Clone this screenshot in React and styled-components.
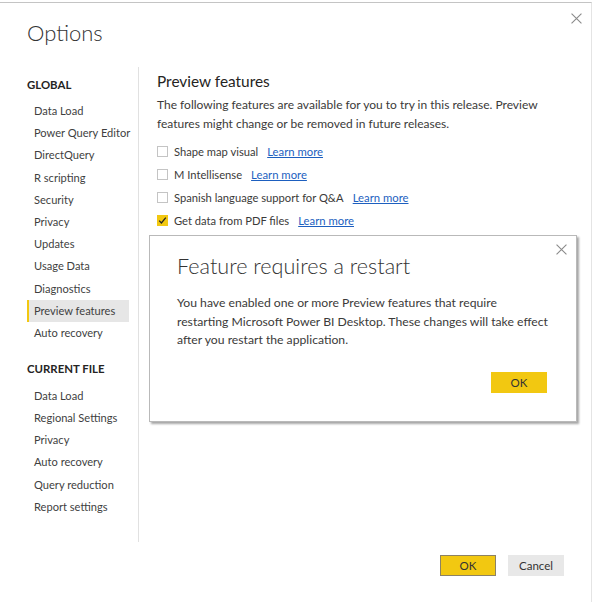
import React from "react";
import styled, { createGlobalStyle } from "styled-components";

const FONT = `"Segoe UI", Lato, "Noto Sans", sans-serif`;

const Global = createGlobalStyle`
  html, body { margin: 0; padding: 0; background: #fff; }
  body { font-family: ${FONT}; color: #3b3a39; }
  * { box-sizing: border-box; }
`;

const Window = styled.div`
  position: relative;
  width: 592px;
  height: 600px;
  margin-top: 2px;
  border-top: 1px solid #c4c4c4;
  border-right: 1px solid #e4e4e4;
  background: #fff;
  font-family: ${FONT};
`;

const CloseX = styled.button`
  position: absolute;
  top: ${(p) => p.$top}px;
  right: ${(p) => p.$right}px;
  width: 14px;
  height: 14px;
  padding: 0;
  border: 0;
  background: transparent;
  display: flex;
  align-items: center;
  justify-content: center;
`;

const Title = styled.h1`
  margin: 0;
  padding: 14px 0 0 27px;
  height: 64px;
  font-family: ${FONT};
  font-weight: 300;
  font-size: 22px;
  line-height: 32px;
  color: #333;
`;

const Body = styled.div`
  display: flex;
  align-items: flex-start;
`;

const Sidebar = styled.nav`
  width: 112px;
  margin-left: 27px;
  padding-top: 6px;
  padding-bottom: 24px;
  border-right: 1px solid #e1e1e1;
`;

const GroupHeader = styled.div`
  height: 24px;
  line-height: 24px;
  margin-top: ${(p) => p.$mt}px;
  font-size: 11.4px;
  font-weight: 700;
  color: #252423;
`;

const ItemList = styled.ul`
  list-style: none;
  margin: ${(p) => p.$mt}px 0 0 0;
  padding: 0;
`;

const Item = styled.li`
  height: 22.2px;
  line-height: 22.2px;
  width: 102px;
  padding-left: ${(p) => (p.$active ? 5 : 7)}px;
  font-size: 11.1px;
  color: #3f3f3f;
  white-space: nowrap;
  background: ${(p) => (p.$active ? "#e6e6e6" : "transparent")};
  border-left: ${(p) => (p.$active ? "2px solid #f2c811" : "0")};
`;

const Content = styled.section`
  flex: 1;
  padding: 3px 0 0 18px;
`;

const SectionTitle = styled.h2`
  margin: 0;
  height: 22px;
  line-height: 22px;
  font-size: 15.4px;
  font-weight: 400;
  color: #252423;
`;

const Desc = styled.p`
  margin: 3px 0 0 0;
  width: 405px;
  font-size: 12px;
  line-height: 19px;
  color: #3b3a39;
`;

const Rows = styled.div`
  margin-top: 6.5px;
`;

const Row = styled.label`
  display: flex;
  align-items: center;
  height: 23px;
  font-size: 11.2px;
  color: #3b3a39;
`;

const Box = styled.span`
  width: 11px;
  height: 11px;
  margin-right: 6px;
  border: 1px solid ${(p) => (p.$checked ? "#f2c811" : "#c4c4c4")};
  background: ${(p) => (p.$checked ? "#f2c811" : "#fff")};
  display: flex;
  align-items: center;
  justify-content: center;
`;

const Link = styled.a`
  margin-left: 9px;
  font-size: 11.3px;
  color: #1d5fbf;
  text-decoration: underline;
  cursor: pointer;
`;

const Footer = styled.div`
  position: absolute;
  left: 0;
  right: 0;
  bottom: 26px;
  display: flex;
  justify-content: flex-end;
  gap: 12px;
  padding-right: 27px;
`;

const Button = styled.button`
  width: 56px;
  height: 21px;
  padding: 0;
  font-family: ${FONT};
  font-size: 11.5px;
  color: #333;
  border: ${(p) => (p.$primary ? "1px solid #8c8264" : "1px solid #e8e8e8")};
  background: ${(p) => (p.$primary ? "#f2c811" : "#e8e8e8")};
`;

const ModalOk = styled(Button)`
  border: 0;
  margin-right: 4px;
`;

const Modal = styled.div`
  position: absolute;
  left: 149px;
  top: 232px;
  width: 428px;
  height: 187px;
  background: #fff;
  border: 1px solid #b9b9b9;
  box-shadow: 2px 2px 2px rgba(0, 0, 0, 0.35);
  padding: 12px 25px 0 27px;
`;

const ModalTitle = styled.h3`
  margin: 0;
  height: 36px;
  line-height: 36px;
  font-size: 21.6px;
  font-weight: 300;
  color: #333;
`;

const ModalText = styled.p`
  margin: 10px 0 0 0;
  font-size: 12.2px;
  line-height: 18.5px;
  color: #3b3a39;
`;

const ModalActions = styled.div`
  display: flex;
  justify-content: flex-end;
  margin-top: 22px;
`;

const XIcon = ({ size = 10, color = "#8a8a8a" }) => (
  <svg width={size} height={size} viewBox="0 0 10 10">
    <path d="M0.5 0.5 L9.5 9.5 M9.5 0.5 L0.5 9.5" stroke={color} strokeWidth="1" fill="none" />
  </svg>
);

const Check = () => (
  <svg width="9" height="9" viewBox="0 0 9 9">
    <path d="M1.2 4.6 L3.4 6.9 L7.8 1.6" stroke="#252423" strokeWidth="1.3" fill="none" />
  </svg>
);

const globalItems = [
  "Data Load",
  "Power Query Editor",
  "DirectQuery",
  "R scripting",
  "Security",
  "Privacy",
  "Updates",
  "Usage Data",
  "Diagnostics",
  "Preview features",
  "Auto recovery",
];

const fileItems = [
  "Data Load",
  "Regional Settings",
  "Privacy",
  "Auto recovery",
  "Query reduction",
  "Report settings",
];

const features = [
  { label: "Shape map visual", checked: false },
  { label: "M Intellisense", checked: false },
  { label: "Spanish language support for Q&A", checked: false },
  { label: "Get data from PDF files", checked: true },
];

export default function App() {
  return (
    <>
      <Global />
      <Window>
        <CloseX $top={8} $right={8} aria-label="Close">
          <XIcon size={11} />
        </CloseX>
        <Title>Options</Title>
        <Body>
          <Sidebar>
            <GroupHeader $mt={0}>GLOBAL</GroupHeader>
            <ItemList $mt={3}>
              {globalItems.map((t) => (
                <Item key={t} $active={t === "Preview features"}>
                  {t}
                </Item>
              ))}
            </ItemList>
            <GroupHeader $mt={12.8}>CURRENT FILE</GroupHeader>
            <ItemList $mt={3.9}>
              {fileItems.map((t) => (
                <Item key={t}>{t}</Item>
              ))}
            </ItemList>
          </Sidebar>
          <Content>
            <SectionTitle>Preview features</SectionTitle>
            <Desc>
              The following features are available for you to try in this release. Preview
              features might change or be removed in future releases.
            </Desc>
            <Rows>
              {features.map((f) => (
                <Row key={f.label}>
                  <Box $checked={f.checked}>{f.checked && <Check />}</Box>
                  {f.label}
                  <Link>Learn more</Link>
                </Row>
              ))}
            </Rows>
          </Content>
        </Body>
        <Footer>
          <Button $primary>OK</Button>
          <Button>Cancel</Button>
        </Footer>
        <Modal>
          <CloseX $top={6} $right={8} aria-label="Close">
            <XIcon size={11} />
          </CloseX>
          <ModalTitle>Feature requires a restart</ModalTitle>
          <ModalText>
            You have enabled one or more Preview features that require restarting Microsoft
            Power BI Desktop. These changes will take effect after you restart the application.
          </ModalText>
          <ModalActions>
            <ModalOk $primary>OK</ModalOk>
          </ModalActions>
        </Modal>
      </Window>
    </>
  );
}
